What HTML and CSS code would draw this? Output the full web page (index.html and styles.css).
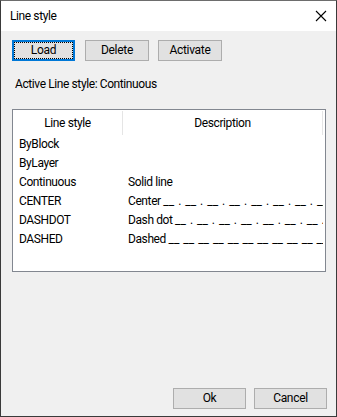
FILE: index.html
```html
<html>
    <head>
        <title>Line style</title>
        <link rel="stylesheet" href="styles.css">
    </head>
    <body>
        <div class="window">
            <div class="titlebar">
                <span class="title">Line style</span>
                <svg class="close" width="12" height="12" viewBox="0 0 12 12">
                    <path d="M1 1 L11 11 M11 1 L1 11" stroke="#000" stroke-width="1.1" fill="none"/>
                </svg>
            </div>
            <div class="toolbar">
                <button class="btn btn-focus">Load</button>
                <button class="btn btn-delete">Delete</button>
                <button class="btn btn-activate">Activate</button>
            </div>
            <p class="active">Active Line style: Continuous</p>
            <div class="listbox">
                <div class="row head">
                    <div class="col1 hcell">Line style</div>
                    <div class="col2 hcell">Description</div>
                </div>
                <div class="row"><div class="col1">ByBlock</div><div class="col2"></div></div>
                <div class="row"><div class="col1">ByLayer</div><div class="col2"></div></div>
                <div class="row"><div class="col1">Continuous</div><div class="col2">Solid line</div></div>
                <div class="row"><div class="col1">CENTER</div><div class="col2">Center <span class="dash">__ . __ . __ . __ . __ . __ . __ . __ . __ . __</span></div></div>
                <div class="row"><div class="col1">DASHDOT</div><div class="col2">Dash dot <span class="dash">__ . __ . __ . __ . __ . __ . __ . __ . __ . __</span></div></div>
                <div class="row"><div class="col1">DASHED</div><div class="col2">Dashed <span class="dash">__ __ __ __ __ __ __ __ __ __ __ __ __ __ __ __</span></div></div>
            </div>
            <div class="footer">
                <button class="btn btn-ok">Ok</button>
                <button class="btn btn-cancel">Cancel</button>
            </div>
        </div>
    </body>
</html>
```
FILE: styles.css
```css
body {
    margin: 0;
    font-family: Roboto, "Noto Sans", sans-serif;
    font-size: 12px;
    letter-spacing: -0.4px;
    color: #000;
}
.window {
    width: 337px;
    height: 417px;
    box-sizing: border-box;
    border: 1px solid #3a3a3a;
    border-top-color: #6d6d6d;
    background: #f0f0f0;
    display: flex;
    flex-direction: column;
}
.titlebar {
    height: 30px;
    background: #fff;
    display: flex;
    align-items: center;
    justify-content: space-between;
    padding: 0 9px 0 9px;
}
.title {
    font-size: 12px;
}
.toolbar {
    display: flex;
    margin: 9px 0 0 11px;
}
.btn {
    height: 21px;
    box-sizing: border-box;
    border: 1px solid #adadad;
    background: #e1e1e1;
    font-family: Roboto, "Noto Sans", sans-serif;
    font-size: 12px;
    letter-spacing: -0.3px;
    color: #000;
    padding: 0;
    line-height: 17px;
}
.btn-focus {
    width: 63px;
    border: 2px solid #0078d7;
    outline: 1px dotted #000;
    outline-offset: -3px;
}
.btn-delete {
    width: 64px;
    margin-left: 10px;
}
.btn-activate {
    width: 64px;
    margin-left: 9px;
}
.active {
    margin: 15px 0 0 14px;
    line-height: 16px;
}
.listbox {
    margin: 17px 0 0 11px;
    width: 314px;
    height: 163px;
    box-sizing: border-box;
    border: 1px solid #828790;
    background: #fff;
    overflow: hidden;
}
.row {
    display: flex;
    height: 19px;
    line-height: 19px;
}
.row.head {
    height: 24px;
    line-height: 24px;
    padding-top: 1px;
}
.col1 {
    width: 110px;
    padding-left: 6px;
    box-sizing: border-box;
    white-space: nowrap;
}
.col2 {
    width: 200px;
    padding-left: 5px;
    box-sizing: border-box;
    white-space: nowrap;
    overflow: hidden;
}
.dash {
    letter-spacing: 0;
    word-spacing: 1px;
}
.hcell {
    text-align: center;
    padding-left: 0;
    border-right: 1px solid #e5e5e5;
}
.footer {
    margin-top: auto;
    display: flex;
    justify-content: flex-end;
    padding: 0 9px 7px 0;
}
.btn-ok {
    width: 73px;
}
.btn-cancel {
    width: 73px;
    margin-left: 8px;
}
```
